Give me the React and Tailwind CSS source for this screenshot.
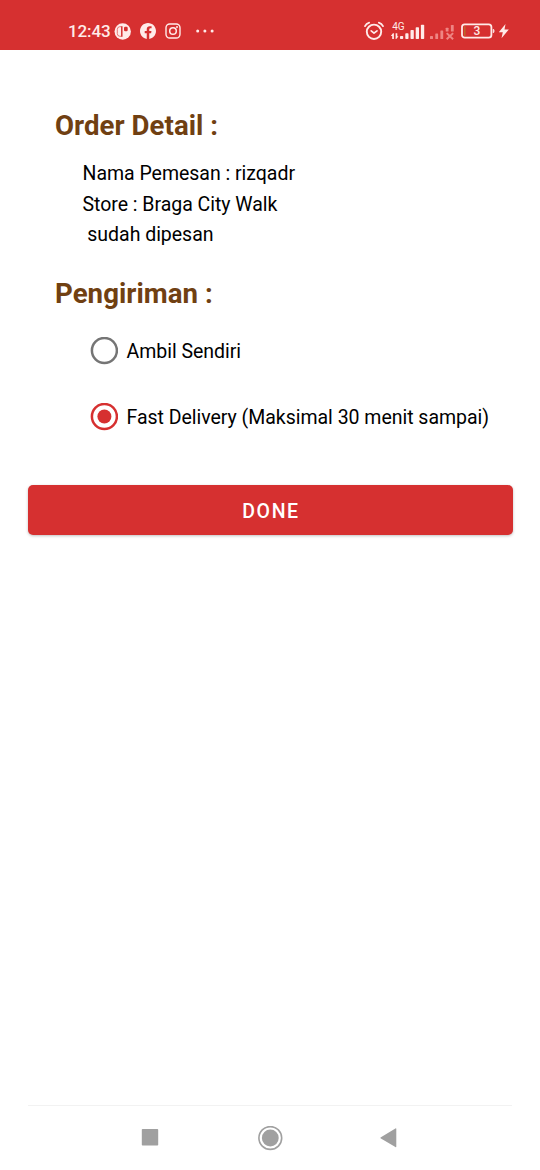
function ParkingIcon() {
  return (
    <svg className="ml-1 size-[17px]" viewBox="0 0 17 17">
      <circle cx="8.7" cy="8.5" r="8.2" fill="#ffebe9" />
      <path d="M7.4 3.7H5.8Q3.3 3.9 3.3 6.4v4.2q0 2.5 2.5 2.7h1.6" fill="none" stroke="#e26a68" strokeWidth=".9" />
      <path d="M7.8 3.3v10.4" stroke="#d63030" strokeWidth="1.5" />
      <rect x="10" y="3.8" width="3.7" height="4.5" rx="1.2" fill="#d63030" />
    </svg>
  );
}

function FacebookIcon() {
  return (
    <svg className="ml-[9px] size-4" viewBox="0 0 24 24" fill="#ffebe9">
      <path d="M24 12.07C24 5.4 18.63 0 12 0S0 5.4 0 12.07c0 6.03 4.39 11.02 10.12 11.93v-8.44H7.08v-3.49h3.04V9.41c0-3.02 1.8-4.7 4.54-4.7 1.31 0 2.68.24 2.68.24v2.97h-1.5c-1.5 0-1.96.93-1.96 1.89v2.26h3.32l-.53 3.49h-2.8V24C19.61 23.09 24 18.1 24 12.07z" />
    </svg>
  );
}

function InstagramIcon() {
  return (
    <svg className="ml-[9px] size-4" viewBox="0 0 16 16" fill="none" stroke="#ffebe9">
      <rect x="1" y="1" width="14" height="14" rx="3.8" strokeWidth="1.4" />
      <circle cx="8" cy="8" r="3.3" strokeWidth="1.5" />
      <circle cx="12" cy="4" r="1" fill="#ffebe9" stroke="none" />
    </svg>
  );
}

function MoreIcon() {
  return (
    <svg className="ml-[14px] h-4 w-5" viewBox="0 0 20 16" fill="#ffebe9">
      <circle cx="2.7" cy="8" r="1.5" />
      <circle cx="9.9" cy="8" r="1.5" />
      <circle cx="17.1" cy="8" r="1.5" />
    </svg>
  );
}

function AlarmIcon() {
  return (
    <svg className="h-5 w-5" viewBox="0 0 20 20" fill="none" stroke="#ffebe9" strokeLinecap="round" strokeLinejoin="round">
      <circle cx="10" cy="10.8" r="7.2" strokeWidth="1.9" />
      <path d="M7.2 9.8l2.8 2.4 3-2.4" strokeWidth="1.7" />
      <path d="M1 5.2Q2.2 2.4 5.2 1.6M19 5.2Q17.8 2.4 14.8 1.6" strokeWidth="1.7" />
    </svg>
  );
}

function SignalIcon() {
  return (
    <svg className="ml-[7px] h-5 w-[34px]" viewBox="0 0 34 20" fill="#ffebe9">
      <text x="1.2" y="8.7" fontFamily="Roboto, sans-serif" fontSize="10">4G</text>
      <path d="M1.9 12.2L-.1 14.9h1.3v3h1.7v-5.7zM5.3 18l2.2-2.7H6.3v-3H4.6V18z" />
      <rect x="9" y="15" width="3.2" height="3" rx=".7" />
      <rect x="14.3" y="12.2" width="3.2" height="5.8" rx=".7" />
      <rect x="19.5" y="9" width="3.3" height="9" rx=".7" />
      <rect x="24.7" y="6.3" width="3.3" height="11.7" rx=".7" />
      <rect x="29.9" y="3.7" width="3.3" height="14.3" rx=".7" />
    </svg>
  );
}

function NoSignalIcon() {
  return (
    <svg className="ml-[5px] h-5 w-[25px]" viewBox="0 0 25 20" fill="#ee8583">
      <rect x="0" y="15" width="3" height="3" rx=".6" />
      <rect x="5.3" y="12.5" width="2.8" height="5.5" rx=".6" />
      <rect x="10.4" y="9.5" width="2.8" height="8.5" rx=".6" />
      <rect x="15.7" y="6.7" width="2.8" height="3.9" rx=".6" />
      <rect x="20.9" y="4" width="2.8" height="6.6" rx=".6" />
      <path d="M16.7 12.1l6.4 6.2m0-6.2l-6.4 6.2" stroke="#ee8583" strokeWidth="2" />
    </svg>
  );
}

function BatteryIcon() {
  return (
    <svg className="ml-[6px] h-5 w-[34px]" viewBox="0 0 34 20">
      <rect x="1" y="3.3" width="29.4" height="13.4" rx="2.7" fill="none" stroke="#ffebe9" strokeWidth="1.8" />
      <rect x="3" y="5.2" width="1.5" height="9.6" fill="#bd652b" />
      <path d="M32.2 8a2.5 2.5 0 0 1 0 4z" fill="#ffebe9" stroke="#ffebe9" strokeWidth=".6" />
      <text x="15.8" y="14.4" textAnchor="middle" fontFamily="Roboto, sans-serif" fontSize="12" fontWeight="500" fill="#ffebe9">3</text>
    </svg>
  );
}

function BoltIcon() {
  return (
    <svg className="ml-1 h-4 w-[10px]" viewBox="0 0 10 16" fill="#ffebe9">
      <path d="M6.5 1L-.2 9.2h4L2.5 15.2 9.8 6.6H5.5z" />
    </svg>
  );
}

function StatusBar() {
  return (
    <header className="flex h-[50px] items-center bg-[#d63030] pt-3 pr-[31px] pl-[68px]">
      <span className="w-[42px] text-[17px] leading-5 font-medium tracking-[-0.1px] whitespace-nowrap text-[#ffebe9]">12:43</span>
      <ParkingIcon />
      <FacebookIcon />
      <InstagramIcon />
      <MoreIcon />
      <div className="ml-auto flex items-center">
        <AlarmIcon />
        <SignalIcon />
        <NoSignalIcon />
        <BatteryIcon />
        <BoltIcon />
      </div>
    </header>
  );
}

function DeliveryOption({ label, checked }) {
  return (
    <label className="flex h-[66px] items-center">
      <input type="radio" name="delivery" className="sr-only" defaultChecked={checked} />
      <svg className="size-7" viewBox="0 0 28 28">
        <circle cx="14.4" cy="13.5" r="12.5" fill="none" stroke={checked ? "#d63030" : "#757575"} strokeWidth="2.5" />
        {checked && <circle cx="14.4" cy="13.5" r="7" fill="#d63030" />}
      </svg>
      <span className="ml-[8.5px] pt-[3px] text-[19.5px] tracking-[-0.025px] whitespace-nowrap">{label}</span>
    </label>
  );
}

export default function App() {
  return (
    <div className="flex h-[1170px] w-[540px] flex-col overflow-hidden bg-white font-[Roboto,sans-serif] text-black">
      <StatusBar />
      <main className="flex grow flex-col">
        <h1 className="mt-[60px] ml-[55px] text-[27.6px] leading-8 font-bold tracking-[0.05px] text-[#704012]">Order Detail :</h1>
        <div className="mt-[17px] ml-[82.5px] text-[19.5px] leading-[30.5px] tracking-[-0.025px]">
          <p>Nama Pemesan : rizqadr</p>
          <p>Store : Braga City Walk</p>
          <p className="whitespace-pre"> sudah dipesan</p>
        </div>
        <h2 className="mt-[27px] ml-[55px] text-[27.6px] leading-8 font-bold tracking-[0.05px] text-[#704012]">Pengiriman :</h2>
        <div className="mt-2 ml-[90px] flex flex-col">
          <DeliveryOption label="Ambil Sendiri" />
          <DeliveryOption label="Fast Delivery (Maksimal 30 menit sampai)" checked />
        </div>
        <button className="mt-[35px] mr-[27.5px] ml-[27.5px] h-[50px] rounded-[5px] bg-[#d63030] pt-1 pl-[2px] text-[19.5px] font-medium tracking-[0.083em] text-white shadow-[0_1px_3px_rgba(0,0,0,0.25)]">
          DONE
        </button>
      </main>
      <nav className="flex h-[65px] items-center justify-center">
        <div className="flex h-full w-[484px] items-center justify-center gap-[97px] border-t border-[#f2f2f2]">
          <svg className="size-6" viewBox="0 0 24 24">
            <rect x="4.8" y="3" width="16.4" height="16.5" rx=".8" fill="#a0a0a0" />
          </svg>
          <svg className="size-[25px]" viewBox="0 0 25 25">
            <circle cx="12.3" cy="12" r="11.4" fill="none" stroke="#a0a0a0" strokeWidth="1.6" />
            <circle cx="12.3" cy="12" r="8.4" fill="#a0a0a0" />
          </svg>
          <svg className="size-6" viewBox="0 0 24 24">
            <path d="M16.3 2.9v17.6q0 1-.9.4L.9 12.5q-1-.6 0-1.2L15.4 2.5q.9-.5.9.4z" fill="#a0a0a0" />
          </svg>
        </div>
      </nav>
    </div>
  );
}
